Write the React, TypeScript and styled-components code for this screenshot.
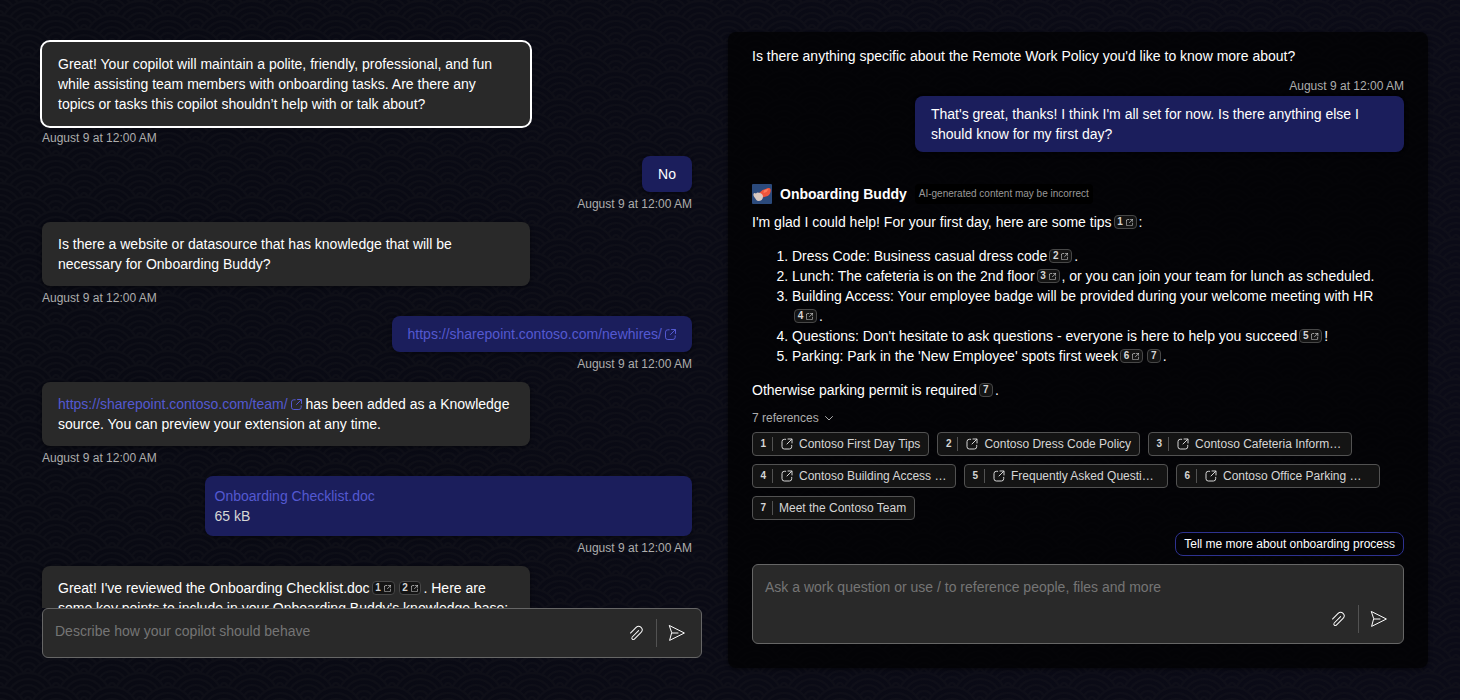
import React from "react";
import styled, { createGlobalStyle, css } from "styled-components";

const cloudPath =
  "M56 26v2h-7.75c2.3-1.27 4.94-2 7.75-2zm-26 2a2 2 0 1 0-4 0h-4.09A25.98 25.98 0 0 0 0 16v-2c.67 0 1.34.02 2 .07V14a2 2 0 0 0-2-2v-2a4 4 0 0 1 3.98 3.6 28.09 28.09 0 0 1 2.8-3.86A8 8 0 0 0 0 6V4a9.99 9.99 0 0 1 8.17 4.23c.94-.95 1.96-1.83 3.03-2.63A13.98 13.98 0 0 0 0 0h7.75c2 1.1 3.73 2.63 5.1 4.45 1.12-.72 2.3-1.37 3.53-1.93A20.1 20.1 0 0 0 14.28 0h2.7c.45.56.88 1.14 1.29 1.74 1.3-.48 2.63-.87 4-1.15-.11-.2-.23-.4-.36-.59H26v.07a28.4 28.4 0 0 1 4 0V0h4.09l-.37.59c1.38.28 2.72.67 4.01 1.15.4-.6.84-1.18 1.3-1.74h2.69a20.1 20.1 0 0 0-2.1 2.52c1.23.56 2.41 1.2 3.54 1.93A16.08 16.08 0 0 1 48.25 0H56c-4.58 0-8.65 2.2-11.2 5.6 1.07.8 2.09 1.68 3.03 2.63A9.99 9.99 0 0 1 56 4v2a8 8 0 0 0-6.77 3.74c1.03 1.2 1.97 2.5 2.79 3.86A4 4 0 0 1 56 10v2a2 2 0 0 0-2 2.07 28.4 28.4 0 0 1 2-.07v2c-9.2 0-17.3 4.78-21.91 12H30zM7.75 28H0v-2c2.81 0 5.46.73 7.75 2zM56 20v2c-5.6 0-10.65 2.3-14.28 6h-2.7c4.04-4.89 10.15-8 16.98-8zm-39.03 8h-2.69C10.65 24.3 5.6 22 0 22v-2c6.83 0 12.94 3.11 16.97 8zm15.01-.4a28.09 28.09 0 0 1 2.8-3.86 8 8 0 0 0-13.55 0c1.03 1.2 1.97 2.5 2.79 3.86a4 4 0 0 1 7.96 0zm14.29-11.86c1.3-.48 2.63-.87 4-1.15a25.99 25.99 0 0 0-44.55 0c1.38.28 2.72.67 4.01 1.15a21.98 21.98 0 0 1 36.54 0zm-5.43 2.71c1.13-.72 2.3-1.37 3.54-1.93a19.98 19.98 0 0 0-32.76 0c1.23.56 2.41 1.2 3.54 1.93a15.98 15.98 0 0 1 25.68 0zm-4.67 3.78c.94-.95 1.96-1.83 3.03-2.63a13.98 13.98 0 0 0-22.4 0c1.07.8 2.09 1.68 3.03 2.63a9.99 9.99 0 0 1 16.34 0z";

const clouds = `url("data:image/svg+xml,%3Csvg xmlns='http://www.w3.org/2000/svg' width='56' height='28' viewBox='0 0 56 28'%3E%3Cpath fill='%2318181f' fill-opacity='0.33' d='${cloudPath}'/%3E%3C/svg%3E")`;

const GlobalStyle = createGlobalStyle`
  * { box-sizing: border-box; }
  body {
    margin: 0;
    background-color: #0a0a14;
    font-family: "Liberation Sans", Arial, sans-serif;
    font-size: 14px;
    line-height: 20px;
    color: #fff;
  }
`;

const Page = styled.main`
  display: grid;
  grid-template-columns: 680px 700px;
  gap: 16px;
  height: 700px;
  padding: 32px;
  background-image: ${clouds}, linear-gradient(to right, #090a13, #0b0b17);
  overflow: hidden;
`;

const BuilderPane = styled.section`
  display: flex;
  flex-direction: column;
  min-height: 0;
  padding-bottom: 10px;
`;

const Messages = styled.div`
  flex: 1;
  min-height: 0;
  display: flex;
  flex-direction: column;
  gap: 10px;
  padding: 10px 20px 0 10px;
  overflow: hidden;
`;

const Message = styled.div<{ $mine?: boolean }>`
  flex: none;
  display: flex;
  flex-direction: column;
  gap: 4px;
  align-items: ${(p) => (p.$mine ? "flex-end" : "flex-start")};
`;

const Bubble = styled.div<{ $mine?: boolean; $fill?: boolean; $focused?: boolean; $dense?: boolean }>`
  max-width: 75%;
  ${(p) => p.$fill && css`width: 75%;`}
  padding: ${(p) => (p.$mine ? "8px 16px" : "12px 16px")};
  ${(p) => p.$dense && css`padding: 10px;`}
  border-radius: 8px;
  background: ${(p) => (p.$mine ? "#1b1e5c" : "#292929")};
  box-shadow: 0 0 2px rgba(0, 0, 0, 0.24), 0 2px 4px rgba(0, 0, 0, 0.28);
  ${(p) => p.$focused && css`outline: 2px solid #fff;`}
`;

const Stamp = styled.time`
  font-size: 12px;
  line-height: 16px;
  color: #adadad;
`;

const Link = styled.a`
  color: #5459d1;
`;

const FileSize = styled.div`
  color: #d6d6d6;
`;

const LinkIcon = styled.svg`
  width: 11px;
  height: 11px;
  margin-left: 3px;
  vertical-align: -0.5px;
`;

const Cite = styled.sup`
  display: inline-flex;
  align-items: center;
  justify-content: center;
  gap: 2.8px;
  height: 14px;
  min-width: 14px;
  margin: 0 2px;
  padding: 0 2.7px;
  border: 1px solid #474747;
  border-radius: 4px;
  background: #141414;
  color: #d6d6d6;
  font-size: 10px;
  font-weight: 700;
  line-height: 12px;
  vertical-align: 2px;
  svg {
    width: 7.2px;
    height: 7.2px;
    margin-top: 1px;
  }
`;

const NoWrap = styled.span`
  white-space: nowrap;
`;

const Composer = styled.div<{ $tall?: boolean; $inset?: boolean }>`
  flex: none;
  display: flex;
  align-items: stretch;
  height: ${(p) => (p.$tall ? 80 : 50)}px;
  margin: 0 ${(p) => (p.$inset ? 10 : 0)}px;
  padding: 10px 10px 10px 12px;
  border: 1px solid #666;
  border-radius: 6px;
  background: #292929;
`;

const Placeholder = styled.div`
  flex: 1;
  padding-top: 2px;
  color: #757575;
`;

const Actions = styled.div`
  align-self: flex-end;
  display: flex;
  align-items: center;
  gap: 6px;
`;

const IconButton = styled.button`
  display: grid;
  place-items: center;
  width: 28px;
  height: 28px;
  padding: 0;
  border: 0;
  background: none;
  color: #fff;
`;

const Divider = styled.span`
  width: 1px;
  height: 28px;
  background: #525252;
`;

const ChatPane = styled.section`
  display: flex;
  flex-direction: column;
  padding: 14px 24px 24px;
  border-radius: 8px;
  background: rgba(0, 0, 0, 0.7);
  box-shadow: 0 0 2px rgba(0, 0, 0, 0.24), 0 2px 4px rgba(0, 0, 0, 0.28);
`;

const Outgoing = styled.div`
  display: flex;
  flex-direction: column;
  align-items: flex-end;
  gap: 2px;
  margin-top: 12px;
`;

const BotHeader = styled.header`
  display: flex;
  align-items: center;
  height: 20px;
  margin: 32px 0 8px;
`;

const BotName = styled.strong`
  margin: 0 8px;
`;

const Disclaimer = styled.span`
  height: 20px;
  padding: 0 4px;
  border-radius: 4px;
  background: #000;
  color: #999;
  font-size: 10px;
  line-height: 19px;
`;

const Para = styled.p`
  margin: 0;
`;

const Tips = styled.ol`
  margin: 14px 0;
  padding-left: 40px;
`;

const RefToggle = styled.div`
  display: flex;
  align-items: center;
  gap: 4px;
  margin: 10px 0 6px;
  color: #adadad;
  font-size: 12px;
  line-height: 16px;
`;

const RefList = styled.div`
  display: flex;
  flex-wrap: wrap;
  gap: 8px;
`;

const RefChip = styled.a<{ $full?: boolean }>`
  display: flex;
  align-items: center;
  height: 24px;
  ${(p) => p.$full && css`width: 204px;`}
  padding: 0 8px 0 7px;
  border: 1px solid #525252;
  border-radius: 4px;
  background: #141414;
  color: #d6d6d6;
  font-size: 12px;
  line-height: 16px;
  white-space: nowrap;
  svg {
    margin-right: 4px;
  }
`;

const RefNumber = styled.span`
  width: 13px;
  height: 14px;
  margin-right: 6px;
  padding-left: 0.5px;
  border-right: 1px solid #525252;
  font-size: 10px;
  font-weight: 700;
  line-height: 13px;
`;

const Suggestion = styled.button`
  align-self: flex-end;
  height: 24px;
  margin: 12px 0 8px;
  padding: 0 8px;
  border: 1px solid #2e3290;
  border-radius: 8px;
  background: #020207;
  color: #fff;
  font: 12px/16px "Liberation Sans", Arial, sans-serif;
`;

const openGlyph = (
  <>
    <path d="M6.7 3.300H5.300A2.300 2.300 0 0 0 3 5.600v5.100A2.300 2.300 0 0 0 5.300 13h5.100a2.300 2.300 0 0 0 2.300-2.300V9.300" />
    <path d="M9 3h4v4M12.800 3.200 8 8" />
  </>
);

const glyphProps = {
  fill: "none",
  stroke: "currentColor",
  strokeLinecap: "round" as const,
  strokeLinejoin: "round" as const,
};

function Citation({ n, web = true }: { n: number; web?: boolean }) {
  return (
    <Cite>
      {n}
      {web && (
        <svg viewBox="2.5 2.5 11 11" strokeWidth="1.1" {...glyphProps}>
          {openGlyph}
        </svg>
      )}
    </Cite>
  );
}

function OpenMark() {
  return (
    <LinkIcon viewBox="2.5 2.5 11 11" strokeWidth="1" {...glyphProps}>
      {openGlyph}
    </LinkIcon>
  );
}

function ComposerActions() {
  return (
    <Actions>
      <IconButton aria-label="Attach">
        <svg width="20" height="20" viewBox="0 0 20 20" fill="currentColor">
          <path d="m4.83 10.48 5.65-5.65a3 3 0 0 1 4.25 4.24L8 15.78a1 1 0 0 1-1.42-1.41l6.37-6.36a.5.5 0 0 0-.71-.71l-6.36 6.36a2 2 0 0 0 2.82 2.83l6.72-6.71a4 4 0 0 0-5.66-5.66L4.12 9.78a.5.5 0 0 0 .7.7Z" />
        </svg>
      </IconButton>
      <Divider />
      <IconButton aria-label="Send">
        <svg width="20" height="20" viewBox="0 0 20 20" {...glyphProps}>
          <path d="M2.600 2.600 17.400 10 2.600 17.400 4.600 10Z" />
          <path d="M5 10h6" />
        </svg>
      </IconButton>
    </Actions>
  );
}

function Avatar() {
  return (
    <svg width="20" height="20" viewBox="0 0 20 20">
      <rect width="20" height="20" rx="1" fill="#2b4a7c" />
      <path d="M7 9c2-1 3-3 5-3.500 2-.5 3-2 5-1.500 2 .5 2 2 1.500 4-.5 2.500-2 4-4.500 4.500-2 .5-3 1.500-5 .5Z" fill="#ee553c" />
      <path d="M12 6.500c1.500-.8 3-2 4.500-1.500l-2 3-3 1Z" fill="#ff7a59" />
      <path d="M1.500 10c.5-1.500 1.500-1 2.500-.5C5 8 6.500 8.500 8 9c1.500.5 3 1.500 3 3.500 0 3-2 4.500-4.500 4.500-2 0-2.500-1.500-3.500-3C2 12.500 1 11.500 1.500 10Z" fill="#d9c8c0" />
    </svg>
  );
}

const STAMP = "August 9 at 12:00 AM";

const references = [
  { title: "Contoso First Day Tips", web: true, full: false },
  { title: "Contoso Dress Code Policy", web: true, full: false },
  { title: "Contoso Cafeteria Inform…", web: true, full: true },
  { title: "Contoso Building Access …", web: true, full: true },
  { title: "Frequently Asked Questi…", web: true, full: true },
  { title: "Contoso Office Parking …", web: true, full: true },
  { title: "Meet the Contoso Team", web: false, full: false },
];

export default function App() {
  return (
    <>
      <GlobalStyle />
      <Page>
        <BuilderPane>
          <Messages>
            <Message>
              <Bubble $fill $focused>
                Great! Your copilot will maintain a polite, friendly, professional, and fun while assisting team
                members with onboarding tasks. Are there any topics or tasks this copilot shouldn’t help with or talk
                about?
              </Bubble>
              <Stamp>{STAMP}</Stamp>
            </Message>
            <Message $mine>
              <Bubble $mine>No</Bubble>
              <Stamp>{STAMP}</Stamp>
            </Message>
            <Message>
              <Bubble $fill>
                Is there a website or datasource that has knowledge that will be necessary for Onboarding Buddy?
              </Bubble>
              <Stamp>{STAMP}</Stamp>
            </Message>
            <Message $mine>
              <Bubble $mine>
                <Link>
                  https://sharepoint.contoso.com/newhires/
                  <OpenMark />
                </Link>
              </Bubble>
              <Stamp>{STAMP}</Stamp>
            </Message>
            <Message>
              <Bubble $fill>
                <Link>
                  https://sharepoint.contoso.com/team/
                  <OpenMark />
                </Link>{" "}
                has been added as a Knowledge source. You can preview your extension at any time.
              </Bubble>
              <Stamp>{STAMP}</Stamp>
            </Message>
            <Message $mine>
              <Bubble $mine $fill $dense>
                <Link>Onboarding Checklist.doc</Link>
                <FileSize>65 kB</FileSize>
              </Bubble>
              <Stamp>{STAMP}</Stamp>
            </Message>
            <Message>
              <Bubble $fill>
                Great! I've reviewed the Onboarding Checklist.doc
                <Citation n={1} />
                <Citation n={2} />. Here are some key points to include in your Onboarding Buddy's knowledge base:
              </Bubble>
            </Message>
          </Messages>
          <Composer $inset>
            <Placeholder>Describe how your copilot should behave</Placeholder>
            <ComposerActions />
          </Composer>
        </BuilderPane>

        <ChatPane>
          <Para>Is there anything specific about the Remote Work Policy you'd like to know more about?</Para>
          <Outgoing>
            <Stamp>{STAMP}</Stamp>
            <Bubble $mine $fill>
              That's great, thanks! I think I'm all set for now. Is there anything else I should know for my first
              day?
            </Bubble>
          </Outgoing>
          <BotHeader>
            <Avatar />
            <BotName>Onboarding Buddy</BotName>
            <Disclaimer>AI-generated content may be incorrect</Disclaimer>
          </BotHeader>
          <Para>
            I'm glad I could help! For your first day, here are some tips
            <Citation n={1} />:
          </Para>
          <Tips>
            <li>
              Dress Code: Business casual dress code
              <Citation n={2} />.
            </li>
            <li>
              Lunch: The cafeteria is on the 2nd floor
              <Citation n={3} />, or you can join your team for lunch as scheduled.
            </li>
            <li>
              Building Access: Your employee badge will be provided during your welcome meeting with HR{" "}
              <NoWrap>
                <Citation n={4} />.
              </NoWrap>
            </li>
            <li>
              Questions: Don't hesitate to ask questions - everyone is here to help you succeed
              <Citation n={5} />!
            </li>
            <li>
              Parking: Park in the 'New Employee' spots first week
              <Citation n={6} />
              <Citation n={7} web={false} />.
            </li>
          </Tips>
          <Para>
            Otherwise parking permit is required
            <Citation n={7} web={false} />.
          </Para>
          <RefToggle>
            7 references
            <svg width="12" height="12" viewBox="0 0 12 12" {...glyphProps}>
              <path d="m2.500 4.500 3.500 3.500 3.500-3.500" />
            </svg>
          </RefToggle>
          <RefList>
            {references.map((r, i) => (
              <RefChip key={r.title} $full={r.full}>
                <RefNumber>{i + 1}</RefNumber>
                {r.web && (
                  <svg width="16" height="16" viewBox="0 0 16 16" {...glyphProps}>
                    {openGlyph}
                  </svg>
                )}
                {r.title}
              </RefChip>
            ))}
          </RefList>
          <Suggestion>Tell me more about onboarding process</Suggestion>
          <Composer $tall>
            <Placeholder>Ask a work question or use / to reference people, files and more</Placeholder>
            <ComposerActions />
          </Composer>
        </ChatPane>
      </Page>
    </>
  );
}
